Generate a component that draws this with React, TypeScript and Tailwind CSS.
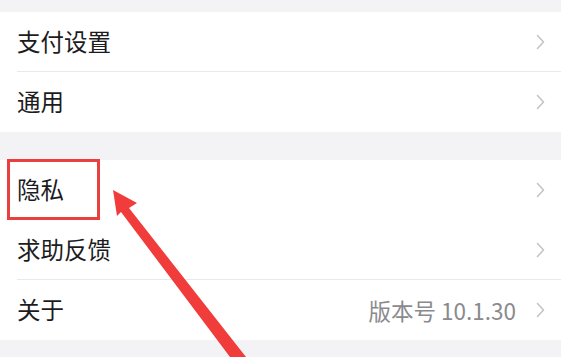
type Row = { label: string; value?: string; line?: boolean };

const groups: Row[][] = [
  [{ label: "支付设置", line: true }, { label: "通用" }],
  [{ label: "隐私" }, { label: "求助反馈", line: true }, { label: "关于", value: "版本号 10.1.30" }],
];

function Chevron() {
  return (
    <svg width="9" height="16" viewBox="0 0 9 16" className="shrink-0">
      <polyline
        points="1.5,1.5 7.5,8 1.5,14.5"
        fill="none"
        stroke="#c4c4c8"
        strokeWidth="1.6"
        strokeLinecap="round"
        strokeLinejoin="round"
      />
    </svg>
  );
}

function SettingsRow({ row }: { row: Row }) {
  return (
    <div className="flex h-[60px] items-stretch pl-[17px]">
      <div
        className={`flex flex-1 items-center justify-between pr-[16px] ${
          row.line ? "border-b border-[#e9e9ec]" : ""
        }`}
      >
        <span className="text-[23.5px] leading-none text-[#1c1c1e]">{row.label}</span>
        <div className="flex items-center gap-[20px]">
          {row.value && (
            <span className="text-[22.5px] leading-none text-[#8a8a8e]">{row.value}</span>
          )}
          <Chevron />
        </div>
      </div>
    </div>
  );
}

export default function App() {
  return (
    <div
      className="relative h-[357px] w-[561px] overflow-hidden bg-[#f3f3f6]"
      style={{ fontFamily: '"Noto Sans CJK SC", "Noto Sans", sans-serif' }}
    >
      <div className="flex flex-col gap-[28px] pt-[12px]">
        {groups.map((g, gi) => (
          <div key={gi} className="bg-white">
            {g.map((row) => (
              <SettingsRow key={row.label} row={row} />
            ))}
          </div>
        ))}
      </div>

      {/* annotation: highlight box */}
      <div className="absolute left-[7px] top-[159px] h-[61px] w-[93px] border-[3px] border-[#e8403e]" />

      {/* annotation: arrow */}
      <svg className="absolute left-0 top-0" width="561" height="357" viewBox="0 0 561 357">
        <polygon
          points="113,190 137,203 129,208 246,357 230,357 121,212 117,216"
          fill="#f03c3a"
        />
      </svg>
    </div>
  );
}
